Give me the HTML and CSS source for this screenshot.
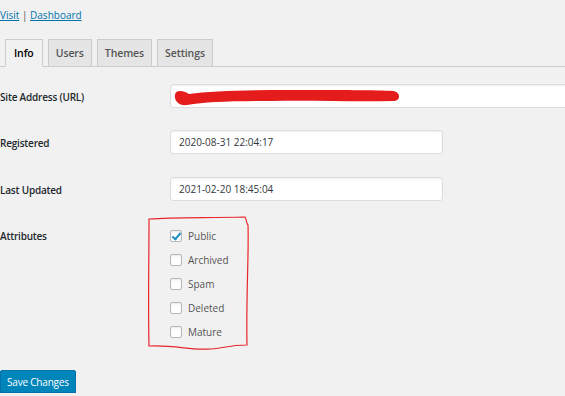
FILE: index.html
```html
<!DOCTYPE html>
<html lang="en">

<head>
    <meta charset="UTF-8">
    <meta name="viewport" content="width=device-width, initial-scale=1.0">
    <title>Edit Site</title>
    <link rel="stylesheet" href="styles.css">
</head>

<body>
    <div class="wrap">
        <p class="edit-links"><a href="#">Visit</a> | <a href="#">Dashboard</a></p>

        <ul class="tabs">
            <li class="active"><a href="#">Info</a></li>
            <li><a href="#">Users</a></li>
            <li><a href="#">Themes</a></li>
            <li><a href="#">Settings</a></li>
        </ul>

        <form class="form">
            <div class="row row-url">
                <label>Site Address (URL)</label>
                <div class="field">
                    <input type="text" class="input input-wide" value="">
                    <svg class="scribble" width="240" height="22" viewBox="0 0 240 22">
                        <path d="M4 9 C4 4 12 4 18 8 C40 5 80 4 120 4 C170 4 205 4 222 5 C230 6 230 15 222 15 C180 16 140 14 100 15 C60 15 35 16 16 19 C8 20 3 15 4 9 Z" fill="#e41c1c" />
                    </svg>
                </div>
            </div>
            <div class="row">
                <label>Registered</label>
                <div class="field">
                    <input type="text" class="input" value="2020-08-31 22:04:17">
                </div>
            </div>
            <div class="row">
                <label>Last Updated</label>
                <div class="field">
                    <input type="text" class="input" value="2021-02-20 18:45:04">
                </div>
            </div>
            <div class="row row-attr">
                <label>Attributes</label>
                <div class="field">
                    <svg class="outline" width="108" height="140" viewBox="0 0 108 140">
                        <path d="M4 5 C30 3 60 4 100 3 C102 6 101 9 103 11 C104 40 101 80 102 131 C82 131 72 136 60 135 C45 136 30 131 4 132 C3 90 4 50 4 5 Z" fill="none" stroke="#e8262a" stroke-width="1.2" />
                    </svg>
                    <label class="check"><span class="box checked"></span>Public</label>
                    <label class="check"><span class="box"></span>Archived</label>
                    <label class="check"><span class="box"></span>Spam</label>
                    <label class="check"><span class="box"></span>Deleted</label>
                    <label class="check"><span class="box"></span>Mature</label>
                </div>
            </div>
            <button type="button" class="btn-primary">Save Changes</button>
        </form>
    </div>
</body>

</html>
```

FILE: styles.css
```css
* {
    margin: 0;
    padding: 0;
    box-sizing: border-box;
}

ul {
    list-style: none;
}

body {
    background-color: #f1f1f1;
    color: #23282d;
    font-family: "Open Sans", "Noto Sans", sans-serif;
    font-size: 10px;
    overflow: hidden;
}

.wrap {
    padding-top: 9px;
}

.edit-links {
    color: #555;
    font-size: 10px;
    line-height: 12px;
}

.edit-links a {
    color: #0073aa;
}

.tabs {
    display: flex;
    gap: 5px;
    margin-top: 18px;
    padding-left: 5px;
    border-bottom: 1px solid #ccc;
}

.tabs li {
    margin-bottom: -1px;
}

.tabs a {
    display: block;
    height: 28px;
    padding: 0 7px;
    border: 1px solid #ccc;
    background-color: #e5e5e5;
    color: #555;
    font-size: 10.5px;
    font-weight: 600;
    letter-spacing: -0.1px;
    line-height: 26px;
    text-decoration: none;
}

.tabs .active a {
    padding: 0 8px;
    background-color: #f1f1f1;
    border-bottom-color: #f1f1f1;
    color: #000;
}

.form {
    padding-top: 17px;
}

.row {
    display: flex;
    align-items: flex-start;
    margin-bottom: 23px;
}

.row > label {
    flex-shrink: 0;
    width: 170px;
    padding-top: 7px;
    font-size: 10px;
    font-weight: 600;
    line-height: 12px;
    letter-spacing: -0.2px;
}

.field {
    position: relative;
    flex: 1;
}

.input {
    display: block;
    width: 273px;
    height: 24px;
    padding: 0 8px;
    border: 1px solid #ddd;
    border-radius: 3px;
    background-color: #fff;
    color: #32373c;
    font-family: inherit;
    font-size: 10px;
    box-shadow: inset 0 1px 2px rgba(0, 0, 0, 0.07);
}

.input-wide {
    width: 410px;
}

.scribble {
    position: absolute;
    left: 1px;
    top: 2px;
}

.row-url {
    margin-bottom: 22px;
}

.row-attr {
    padding-top: 6px;
    margin-bottom: 20px;
}

.row-attr > label {
    padding-top: 0;
}

.outline {
    position: absolute;
    left: -25px;
    top: -16px;
}

.check {
    display: flex;
    align-items: center;
    height: 24px;
    margin-top: -6px;
    margin-bottom: 6px;
    color: #555;
    font-size: 10px;
}

.box {
    width: 12px;
    height: 12px;
    margin-right: 6px;
    border: 1px solid #b4b9be;
    border-radius: 2px;
    background-color: #fff;
    box-shadow: inset 0 1px 2px rgba(0, 0, 0, 0.1);
    position: relative;
}

.box.checked::after {
    content: "";
    position: absolute;
    left: 3px;
    top: 0;
    width: 3px;
    height: 7px;
    border: solid #1e8cbe;
    border-width: 0 2px 2px 0;
    transform: rotate(40deg);
}

.btn-primary {
    display: block;
    height: 23px;
    padding: 0 6px;
    border: 1px solid #0073aa;
    border-radius: 2px;
    background-color: #0085ba;
    color: #fff;
    font-family: inherit;
    font-size: 10px;
    letter-spacing: -0.2px;
    box-shadow: 0 1px 0 #006799;
}
```
